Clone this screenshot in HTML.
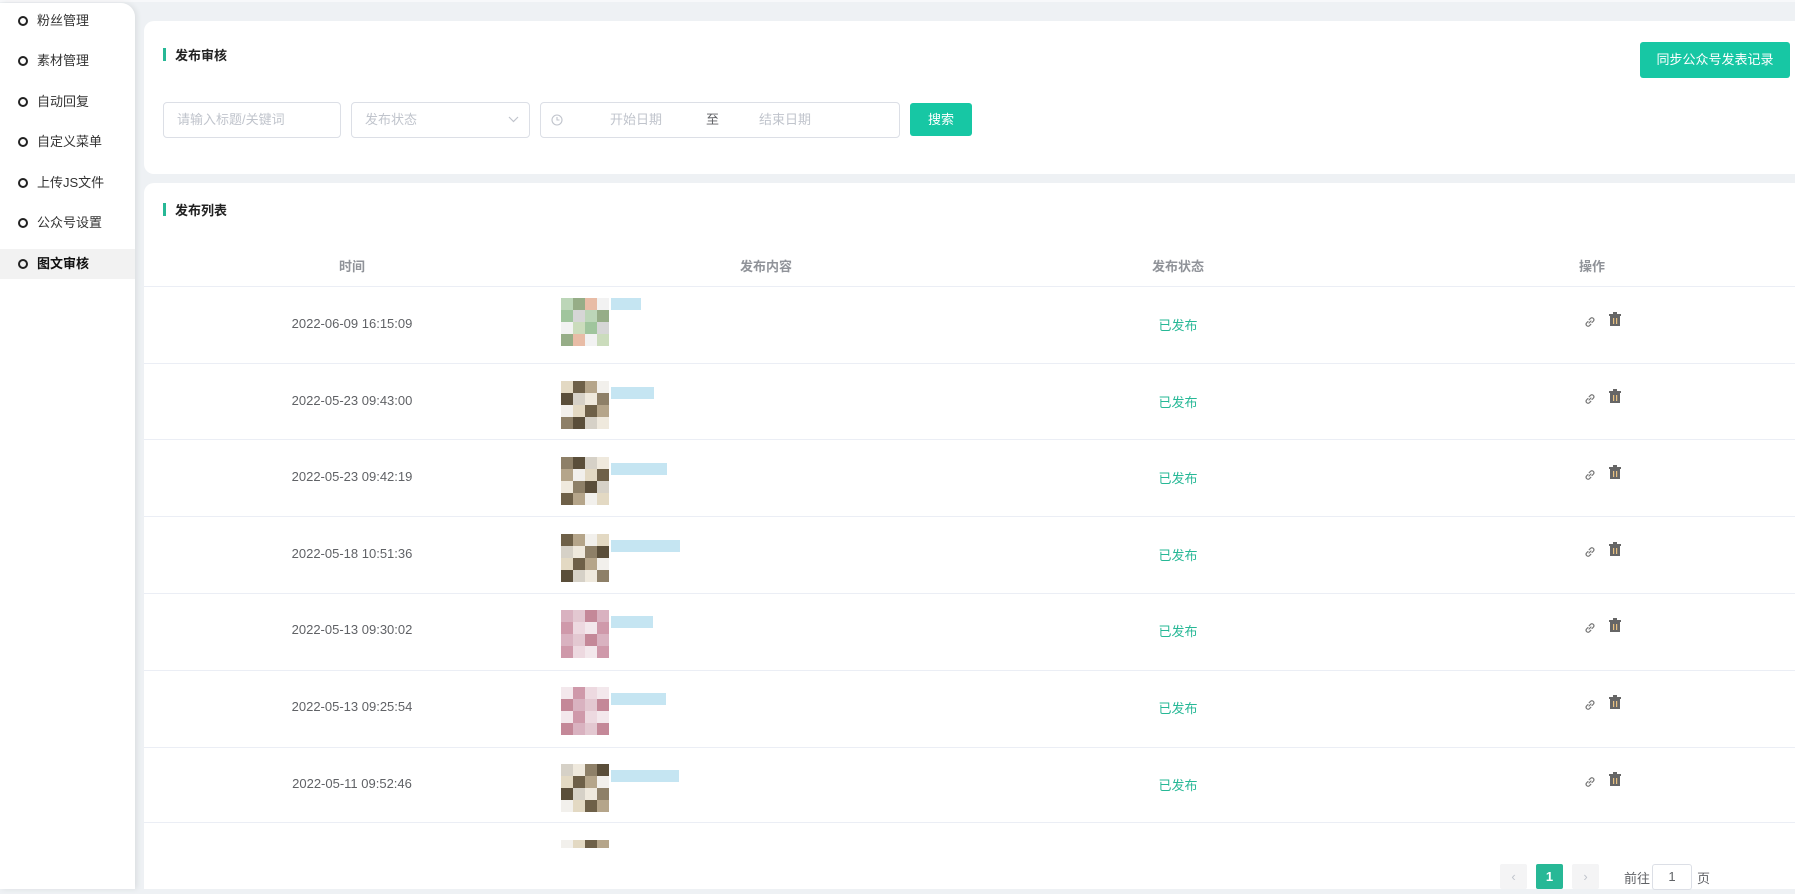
<!DOCTYPE html>
<html><head><meta charset="utf-8">
<style>
*{margin:0;padding:0;box-sizing:border-box}
body{width:1795px;height:889px;overflow:hidden;background:#eef1f4;font-family:"Liberation Sans","Noto Sans CJK SC",sans-serif;position:relative}
.topstrip{position:absolute;left:0;top:0;width:1795px;height:2px;background:#f7f8fa}
.side{position:absolute;left:0;top:3px;width:135px;height:886px;background:#fff;border-top-right-radius:14px;box-shadow:2px 0 6px rgba(0,0,0,.08)}
.mi{position:absolute;left:0;width:135px;height:30px;font-size:13px;color:#333;line-height:30px}
.mi i{position:absolute;left:18px;top:10px;width:10px;height:10px;border:2px solid #222;border-radius:50%}
.mi span{position:absolute;left:37px}
.mi.act{background:#f2f2f2;font-weight:bold;color:#111}
.card{position:absolute;left:144px;background:#fff;border-radius:10px 0 0 10px}
.ttl{position:absolute;left:31px;font-size:13px;font-weight:bold;color:#222}
.ttl:before{content:"";position:absolute;left:-12px;top:3px;width:3px;height:13px;background:#27b896}
.inp{position:absolute;top:102px;height:36px;border:1px solid #dcdfe6;border-radius:4px;font-size:13px;color:#c0c4cc;line-height:34px}
.btn{position:absolute;background:#17c7a4;color:#fff;border-radius:3px;font-size:13px;text-align:center}
.th{position:absolute;top:256px;font-size:13px;font-weight:bold;color:#909399;transform:translateX(-50%)}
.line{position:absolute;left:144px;width:1651px;height:1px;background:#ebeef5}
.date{position:absolute;font-size:13px;color:#606266;transform:translateX(-50%);white-space:nowrap}
.st{position:absolute;left:1178px;font-size:13px;color:#27b896;transform:translateX(-50%)}
.thumb{position:absolute;left:561px;width:140px;height:60px}
.thumb b{position:absolute;width:12px;height:12px}
.pg{position:absolute;top:864px;width:27px;height:25px;background:#f4f4f5;border-radius:2px;color:#c0c4cc;font-size:13px;text-align:center;line-height:25px}
</style></head><body>
<div class="topstrip"></div>
<div class="side">
<div class="mi" style="top:3px"><i></i><span>粉丝管理</span></div>
<div class="mi" style="top:43px"><i></i><span>素材管理</span></div>
<div class="mi" style="top:84px"><i></i><span>自动回复</span></div>
<div class="mi" style="top:124px"><i></i><span>自定义菜单</span></div>
<div class="mi" style="top:165px"><i></i><span>上传JS文件</span></div>
<div class="mi" style="top:205px"><i></i><span>公众号设置</span></div>
<div class="mi act" style="top:246px"><i></i><span>图文审核</span></div>
</div>

<div class="card" style="top:21px;width:1651px;height:153px">
<div class="ttl" style="top:24px">发布审核</div>
<div class="btn" style="left:1496px;top:21px;width:150px;height:36px;line-height:36px">同步公众号发表记录</div>
</div>
<div class="inp" style="left:163px;width:178px;padding-left:13px">请输入标题/关键词</div>
<div class="inp" style="left:351px;width:179px;padding-left:13px">发布状态<svg style="position:absolute;right:10px;top:13px" width="11" height="7" viewBox="0 0 11 7"><path d="M1 1l4.5 4.5L10 1" fill="none" stroke="#c0c4cc" stroke-width="1.2"/></svg></div>
<div class="inp" style="left:540px;width:360px">
<svg style="position:absolute;left:10px;top:11px" width="12" height="12" viewBox="0 0 12 12"><circle cx="6" cy="6" r="5" fill="none" stroke="#c0c4cc" stroke-width="1.1"/><path d="M6 3v3h2.5" fill="none" stroke="#c0c4cc" stroke-width="1.1"/></svg>
<span style="position:absolute;left:69px">开始日期</span><span style="position:absolute;left:165px;color:#606266">至</span><span style="position:absolute;left:218px">结束日期</span></div>
<div class="btn" style="left:910px;top:103px;width:62px;height:33px;line-height:33px">搜索</div>

<div class="card" style="top:183px;width:1651px;height:706px">
<div class="ttl" style="top:17px">发布列表</div>
</div>
<div class="th" style="left:352px">时间</div>
<div class="th" style="left:766px">发布内容</div>
<div class="th" style="left:1178px">发布状态</div>
<div class="th" style="left:1592px">操作</div>
<div class="line" style="top:286px"></div>
<div class="line" style="top:363px"></div>
<div class="line" style="top:439px"></div>
<div class="line" style="top:516px"></div>
<div class="line" style="top:593px"></div>
<div class="line" style="top:670px"></div>
<div class="line" style="top:747px"></div>
<div class="line" style="top:822px"></div>

<div id="rows"></div>
<script>
var d=["2022-06-09 16:15:09","2022-05-23 09:43:00","2022-05-23 09:42:19","2022-05-18 10:51:36","2022-05-13 09:30:02","2022-05-13 09:25:54","2022-05-11 09:52:46"];
var pal={g:["#bcd6b8","#cbdcbc","#96ad87","#a0c59d","#e8bca6","#d6d6d6","#f2f2f2"],b:["#efe9dd","#e3d9c3","#8e8068","#6e6048","#5a4e3a","#b5a58a","#d6d1c7","#f2f0ec"],p:["#e3c8d1","#cf99aa","#c48898","#edd9e0","#d9b2c0","#f3e8ec"]};
var kinds=["g","b","b","b","p","p","b","b"];
var h="";
for(var i=0;i<8;i++){
 var y=286+i*76.6, cy=y+38;
 var t='<div class="thumb" style="top:'+(y+12)+'px">';
 var p=pal[kinds[i]];
 for(var r=0;r<(i==7?2:4);r++)for(var c=0;c<4;c++){t+='<b style="left:'+(c*12)+'px;top:'+(r*12+(kinds[i]=="g"?0:6))+'px;background:'+p[(r*3+c*2+i)%p.length]+'"></b>';}
 t+='<b style="left:50px;top:'+(kinds[i]=="g"?0:(i==7?18:12))+'px;width:'+(30+(i*13)%40)+'px;background:#c5e5f2"></b>';
 t+='</div>';h+=t;
 if(i==7)break;
 h+='<div class="date" style="left:352px;top:'+(cy-8)+'px">'+d[i]+'</div>';
 h+='<div class="st" style="top:'+(cy-9)+'px">已发布</div>';
 h+='<svg style="position:absolute;left:1583px;top:'+(cy-9)+'px" width="14" height="14" viewBox="0 0 14 14"><path d="M6 8l2-2M5 6.5L3.5 8a2 2 0 0 0 2.8 2.8L7.8 9.3M9 7.5l1.5-1.5a2 2 0 0 0-2.8-2.8L6.2 4.7" fill="none" stroke="#777" stroke-width="1.2" stroke-linecap="round"/></svg>';
 h+='<svg style="position:absolute;left:1609px;top:'+(cy-12)+'px" width="12" height="14" viewBox="0 0 12 14"><rect x="4" y="0" width="4" height="2" fill="#666"/><rect x="0" y="2" width="12" height="2" fill="#666"/><rect x="1" y="4" width="10" height="10" fill="#666"/><rect x="4" y="6" width="1.2" height="6" fill="#e8c080"/><rect x="7" y="6" width="1.2" height="6" fill="#e8c080"/></svg>';
}
document.getElementById("rows").innerHTML=h;
</script>
<div style="position:absolute;left:144px;top:848px;width:1651px;height:41px;background:#fff"></div>
<div class="pg" style="left:1500px">&#8249;</div>
<div class="pg" style="left:1536px;background:#27b896;color:#fff;font-weight:bold">1</div>
<div class="pg" style="left:1572px">&#8250;</div>
<div style="position:absolute;left:1624px;top:868px;font-size:13px;color:#606266">前往</div>
<div style="position:absolute;left:1652px;top:864px;width:40px;height:26px;border:1px solid #dcdfe6;border-radius:3px;font-size:13px;color:#606266;text-align:center;line-height:24px">1</div>
<div style="position:absolute;left:1697px;top:868px;font-size:13px;color:#606266">页</div>
</body></html>
